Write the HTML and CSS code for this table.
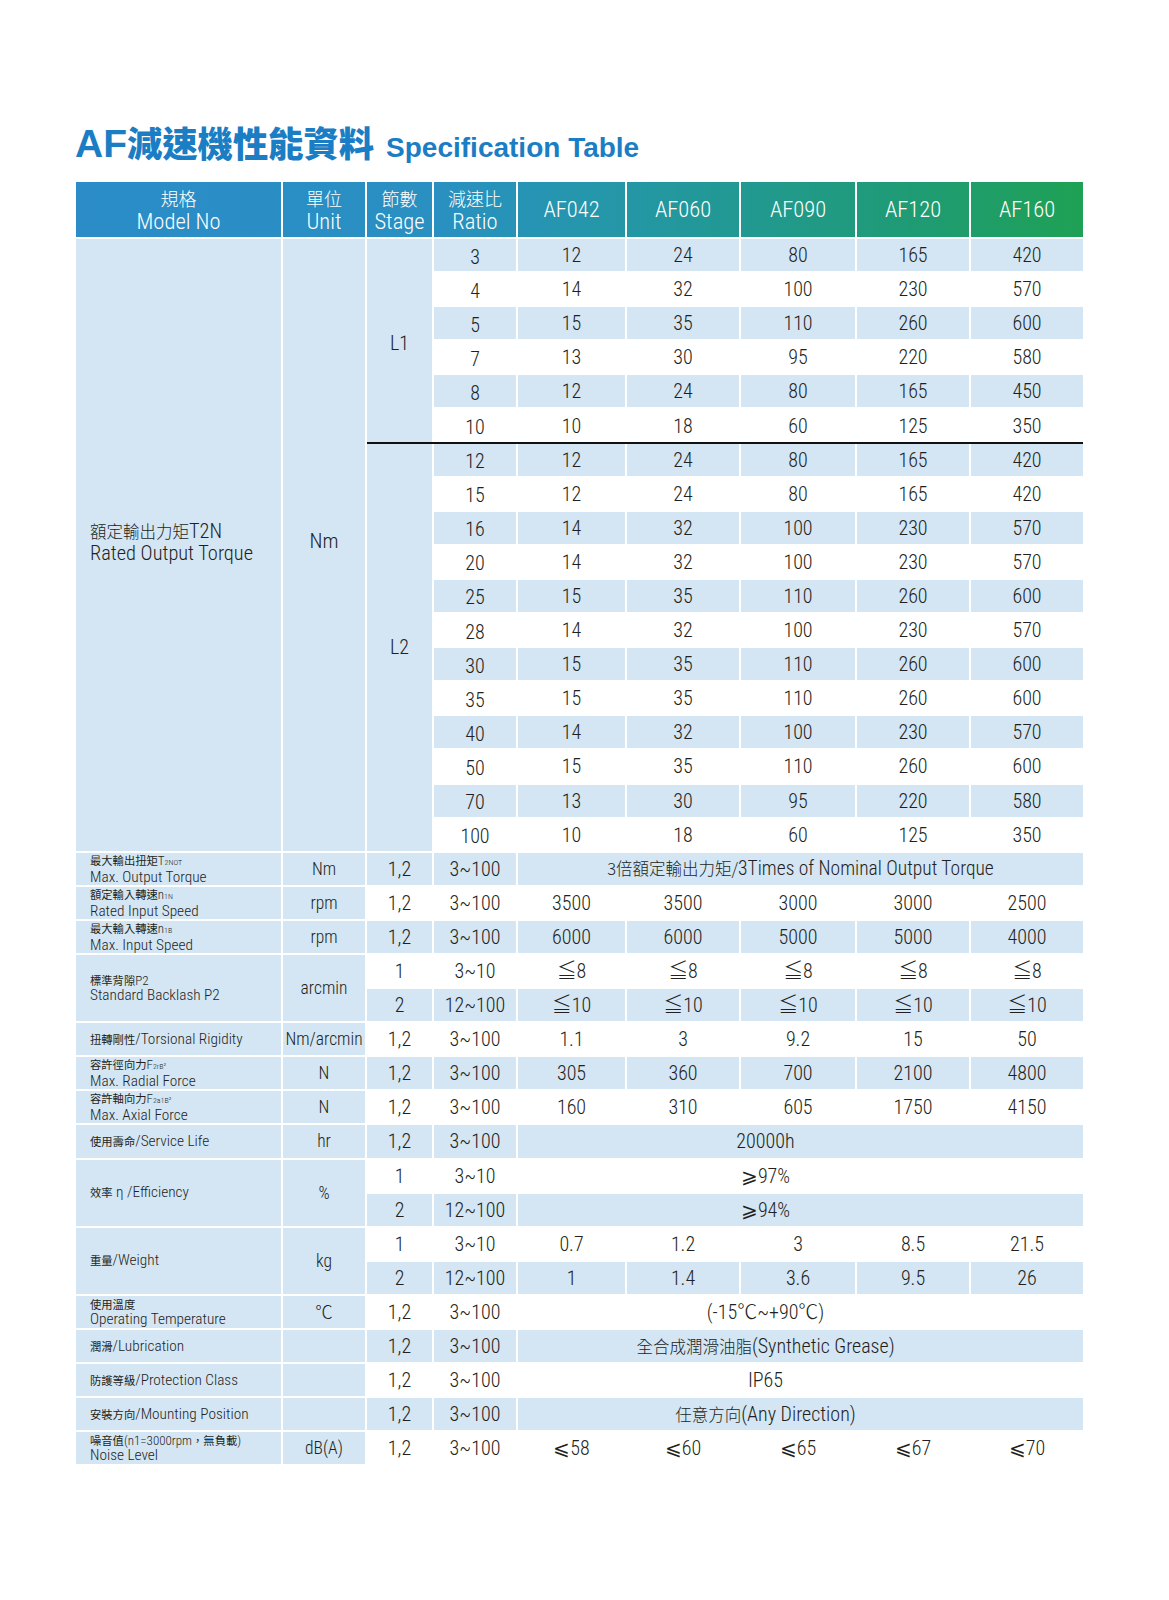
FILE: index.html
```html
<!DOCTYPE html>
<html lang="zh-Hant">
<head>
<meta charset="utf-8">
<title>AF減速機性能資料 Specification Table</title>
<link rel="stylesheet" href="styles.css">
</head>
<body>
<div class="sheet">
  <h1 class="title"><span class="title-zh">AF<span class="title-cjk">減速機性能資料</span></span><span class="title-en">Specification Table</span></h1>
  <table class="spec">
    <colgroup>
      <col class="c-lbl"><col class="c-unit"><col class="c-stage"><col class="c-ratio">
      <col class="c-a"><col class="c-b"><col class="c-c"><col class="c-d"><col class="c-e">
    </colgroup>
    <thead>
      <tr>
        <th><span class="zh">規格</span><br>Model No</th>
        <th><span class="zh">單位</span><br>Unit</th>
        <th><span class="zh">節數</span><br>Stage</th>
        <th><span class="zh">減速比</span><br>Ratio</th>
        <th>AF042</th><th>AF060</th><th>AF090</th><th>AF120</th><th>AF160</th>
      </tr>
    </thead>
    <tbody>
      <tr class="b">
        <td class="lbl big" rowspan="18"><span class="zh">額定輸出力矩</span>T2N<br>Rated Output Torque</td>
        <td class="unit big" rowspan="18">Nm</td>
        <td class="grp l1" rowspan="6">L1</td>
        <td class="ratio">3</td><td>12</td><td>24</td><td>80</td><td>165</td><td>420</td>
      </tr>
      <tr class="w"><td class="ratio">4</td><td>14</td><td>32</td><td>100</td><td>230</td><td>570</td></tr>
      <tr class="b"><td class="ratio">5</td><td>15</td><td>35</td><td>110</td><td>260</td><td>600</td></tr>
      <tr class="w"><td class="ratio">7</td><td>13</td><td>30</td><td>95</td><td>220</td><td>580</td></tr>
      <tr class="b"><td class="ratio">8</td><td>12</td><td>24</td><td>80</td><td>165</td><td>450</td></tr>
      <tr class="w"><td class="ratio">10</td><td>10</td><td>18</td><td>60</td><td>125</td><td>350</td></tr>
      <tr class="b">
        <td class="grp l2" rowspan="12">L2</td>
        <td class="ratio">12</td><td>12</td><td>24</td><td>80</td><td>165</td><td>420</td>
      </tr>
      <tr class="w"><td class="ratio">15</td><td>12</td><td>24</td><td>80</td><td>165</td><td>420</td></tr>
      <tr class="b"><td class="ratio">16</td><td>14</td><td>32</td><td>100</td><td>230</td><td>570</td></tr>
      <tr class="w"><td class="ratio">20</td><td>14</td><td>32</td><td>100</td><td>230</td><td>570</td></tr>
      <tr class="b"><td class="ratio">25</td><td>15</td><td>35</td><td>110</td><td>260</td><td>600</td></tr>
      <tr class="w"><td class="ratio">28</td><td>14</td><td>32</td><td>100</td><td>230</td><td>570</td></tr>
      <tr class="b"><td class="ratio">30</td><td>15</td><td>35</td><td>110</td><td>260</td><td>600</td></tr>
      <tr class="w"><td class="ratio">35</td><td>15</td><td>35</td><td>110</td><td>260</td><td>600</td></tr>
      <tr class="b"><td class="ratio">40</td><td>14</td><td>32</td><td>100</td><td>230</td><td>570</td></tr>
      <tr class="w"><td class="ratio">50</td><td>15</td><td>35</td><td>110</td><td>260</td><td>600</td></tr>
      <tr class="b"><td class="ratio">70</td><td>13</td><td>30</td><td>95</td><td>220</td><td>580</td></tr>
      <tr class="w"><td class="ratio">100</td><td>10</td><td>18</td><td>60</td><td>125</td><td>350</td></tr>

      <tr class="b">
        <td class="lbl"><span class="top"><span class="zh">最大輸出扭矩</span>T<span class="sub">2NOT</span></span><br>Max. Output Torque</td>
        <td class="unit">Nm</td><td class="sr">1,2</td><td class="sr">3~100</td>
        <td class="span wide" colspan="5"><span class="zh">3倍額定輸出力矩/</span>3Times of Nominal Output Torque</td>
      </tr>
      <tr class="w">
        <td class="lbl"><span class="top"><span class="zh">額定輸入轉速</span>n<span class="sub">1N</span></span><br>Rated Input Speed</td>
        <td class="unit">rpm</td><td class="sr">1,2</td><td class="sr">3~100</td>
        <td>3500</td><td>3500</td><td>3000</td><td>3000</td><td>2500</td>
      </tr>
      <tr class="b">
        <td class="lbl"><span class="top"><span class="zh">最大輸入轉速</span>n<span class="sub">1B</span></span><br>Max. Input Speed</td>
        <td class="unit">rpm</td><td class="sr">1,2</td><td class="sr">3~100</td>
        <td>6000</td><td>6000</td><td>5000</td><td>5000</td><td>4000</td>
      </tr>
      <tr class="w">
        <td class="lbl" rowspan="2"><span class="top"><span class="zh">標準背隙</span>P2</span><br>Standard Backlash P2</td>
        <td class="unit" rowspan="2">arcmin</td><td class="sr">1</td><td class="sr">3~10</td>
        <td>≦8</td><td>≦8</td><td>≦8</td><td>≦8</td><td>≦8</td>
      </tr>
      <tr class="b">
        <td class="sr">2</td><td class="sr">12~100</td>
        <td>≦10</td><td>≦10</td><td>≦10</td><td>≦10</td><td>≦10</td>
      </tr>
      <tr class="w">
        <td class="lbl"><span class="zh">扭轉剛性</span>/Torsional Rigidity</td>
        <td class="unit">Nm/arcmin</td><td class="sr">1,2</td><td class="sr">3~100</td>
        <td>1.1</td><td>3</td><td>9.2</td><td>15</td><td>50</td>
      </tr>
      <tr class="b">
        <td class="lbl"><span class="top"><span class="zh">容許徑向力</span>F<span class="sub">2rB²</span></span><br>Max. Radial Force</td>
        <td class="unit">N</td><td class="sr">1,2</td><td class="sr">3~100</td>
        <td>305</td><td>360</td><td>700</td><td>2100</td><td>4800</td>
      </tr>
      <tr class="w">
        <td class="lbl"><span class="top"><span class="zh">容許軸向力</span>F<span class="sub">2a1B²</span></span><br>Max. Axial Force</td>
        <td class="unit">N</td><td class="sr">1,2</td><td class="sr">3~100</td>
        <td>160</td><td>310</td><td>605</td><td>1750</td><td>4150</td>
      </tr>
      <tr class="b">
        <td class="lbl"><span class="zh">使用壽命</span>/Service Life</td>
        <td class="unit">hr</td><td class="sr">1,2</td><td class="sr">3~100</td>
        <td class="span" colspan="5">20000h</td>
      </tr>
      <tr class="w">
        <td class="lbl" rowspan="2"><span class="zh">效率</span> η /Efficiency</td>
        <td class="unit" rowspan="2">%</td><td class="sr">1</td><td class="sr">3~10</td>
        <td class="span" colspan="5">⩾97%</td>
      </tr>
      <tr class="b">
        <td class="sr">2</td><td class="sr">12~100</td>
        <td class="span" colspan="5">⩾94%</td>
      </tr>
      <tr class="w">
        <td class="lbl" rowspan="2"><span class="zh">重量</span>/Weight</td>
        <td class="unit" rowspan="2">kg</td><td class="sr">1</td><td class="sr">3~10</td>
        <td>0.7</td><td>1.2</td><td>3</td><td>8.5</td><td>21.5</td>
      </tr>
      <tr class="b">
        <td class="sr">2</td><td class="sr">12~100</td>
        <td>1</td><td>1.4</td><td>3.6</td><td>9.5</td><td>26</td>
      </tr>
      <tr class="w">
        <td class="lbl"><span class="top"><span class="zh">使用溫度</span></span><br>Operating Temperature</td>
        <td class="unit">℃</td><td class="sr">1,2</td><td class="sr">3~100</td>
        <td class="span" colspan="5">(-15℃~+90℃)</td>
      </tr>
      <tr class="b">
        <td class="lbl"><span class="zh">潤滑</span>/Lubrication</td>
        <td class="unit"></td><td class="sr">1,2</td><td class="sr">3~100</td>
        <td class="span" colspan="5"><span class="zh">全合成潤滑油脂</span>(Synthetic Grease)</td>
      </tr>
      <tr class="w">
        <td class="lbl"><span class="zh">防護等級</span>/Protection Class</td>
        <td class="unit"></td><td class="sr">1,2</td><td class="sr">3~100</td>
        <td class="span" colspan="5">IP65</td>
      </tr>
      <tr class="b">
        <td class="lbl"><span class="zh">安裝方向</span>/Mounting Position</td>
        <td class="unit"></td><td class="sr">1,2</td><td class="sr">3~100</td>
        <td class="span" colspan="5"><span class="zh">任意方向</span>(Any Direction)</td>
      </tr>
      <tr class="w">
        <td class="lbl"><span class="top"><span class="zh">噪音值</span>(n1=3000rpm<span class="zh">，無負載</span>)</span><br>Noise Level</td>
        <td class="unit">dB(A)</td><td class="sr">1,2</td><td class="sr">3~100</td>
        <td>⩽58</td><td>⩽60</td><td>⩽65</td><td>⩽67</td><td>⩽70</td>
      </tr>
    </tbody>
  </table>
</div>
</body>
</html>
```

FILE: styles.css
```css
html, body {
  margin: 0;
  padding: 0;
  background: #ffffff;
}

body {
  color: #231f20;
  font-family: "Liberation Sans", Arial, "Noto Sans CJK TC", "DejaVu Sans", sans-serif;
}

.sheet {
  padding: 124px 0 60px 74px;
}

.title {
  margin: 0 0 17px 0;
  display: flex;
  align-items: baseline;
  line-height: 1;
  color: #1b7dc3;
  font-weight: bold;
}

.title-zh {
  font-family: "Liberation Sans", Arial, "Noto Sans CJK TC", sans-serif;
  font-size: 39px;
  padding-left: 1px;
}

.title-cjk {
  font-family: "Noto Sans CJK TC", sans-serif;
  font-weight: 900;
  font-size: 35.3px;
}

.title-en {
  font-family: "Liberation Sans", Arial, sans-serif;
  font-size: 28px;
  margin-left: 12px;
}

.spec {
  border-collapse: separate;
  border-spacing: 2px;
  table-layout: fixed;
  width: 1011px;
  font-family: "Roboto Condensed", "Liberation Sans", Arial, "Noto Sans CJK TC", "DejaVu Sans", sans-serif;
  font-weight: 300;
}

.c-lbl { width: 205px; }
.c-unit { width: 82px; }
.c-stage { width: 65px; }
.c-ratio { width: 82px; }
.c-a { width: 107px; }
.c-b { width: 112px; }
.c-c { width: 114px; }
.c-d { width: 112px; }
.c-e { width: 112px; }

.spec thead tr {
  background: linear-gradient(90deg, #2b8cc8 0%, #2990c1 36%, #2596ad 50%, #21998e 68%, #1f9b76 82%, #1ea155 100%);
}

.spec th {
  height: 55px;
  padding: 0;
  color: #ffffff;
  font-weight: 300;
  font-size: 22.5px;
  line-height: 23px;
  text-align: center;
  vertical-align: middle;
}

.spec th .zh {
  font-family: "Noto Sans CJK TC", sans-serif;
  font-size: 18px;
  font-weight: 300;
}

.spec td {
  height: 32.1px;
  padding: 0;
  text-align: center;
  vertical-align: middle;
  font-size: 20px;
  line-height: 20px;
  white-space: nowrap;
}

.spec tr.b td {
  background: #d4e5f4;
}

.spec td.lbl,
.spec td.unit,
.spec td.grp {
  background: #d4e5f4;
}

.spec td.lbl {
  text-align: left;
  padding-left: 14px;
  font-size: 15.3px;
  line-height: 15px;
}

.spec td.lbl .top {
  font-size: 13px;
}

.spec td.lbl .zh {
  font-family: "Noto Sans CJK TC", sans-serif;
  font-size: 11.3px;
  font-weight: 400;
}

.spec td.lbl .sub {
  font-size: 8px;
}

.spec td.lbl.big {
  font-size: 20.4px;
  line-height: 22px;
  padding-bottom: 6px;
}

.spec td.lbl.big .zh {
  font-size: 16.5px;
  font-weight: 300;
}

.spec td.unit {
  font-size: 17.5px;
}

.spec td.unit.big {
  font-size: 21px;
  padding-bottom: 8px;
}

.spec td.grp {
  font-size: 20px;
  position: relative;
}

.spec td.grp.l1 {
  padding-top: 6px;
}

.spec td.grp.l2::before {
  content: "";
  position: absolute;
  left: 0;
  top: -2px;
  width: 716px;
  height: 2px;
  background: #111111;
}

.spec td.ratio {
  padding-top: 3px;
  height: 29.1px;
}

.spec td.sr {
  font-size: 20px;
}

.spec td.span {
  font-size: 20px;
  padding-right: 70px;
}

.spec td.span.wide {
  font-size: 19.5px;
  padding-right: 0;
}

.spec td.span .zh {
  font-family: "Noto Sans CJK TC", sans-serif;
  font-size: 16.5px;
}
```
